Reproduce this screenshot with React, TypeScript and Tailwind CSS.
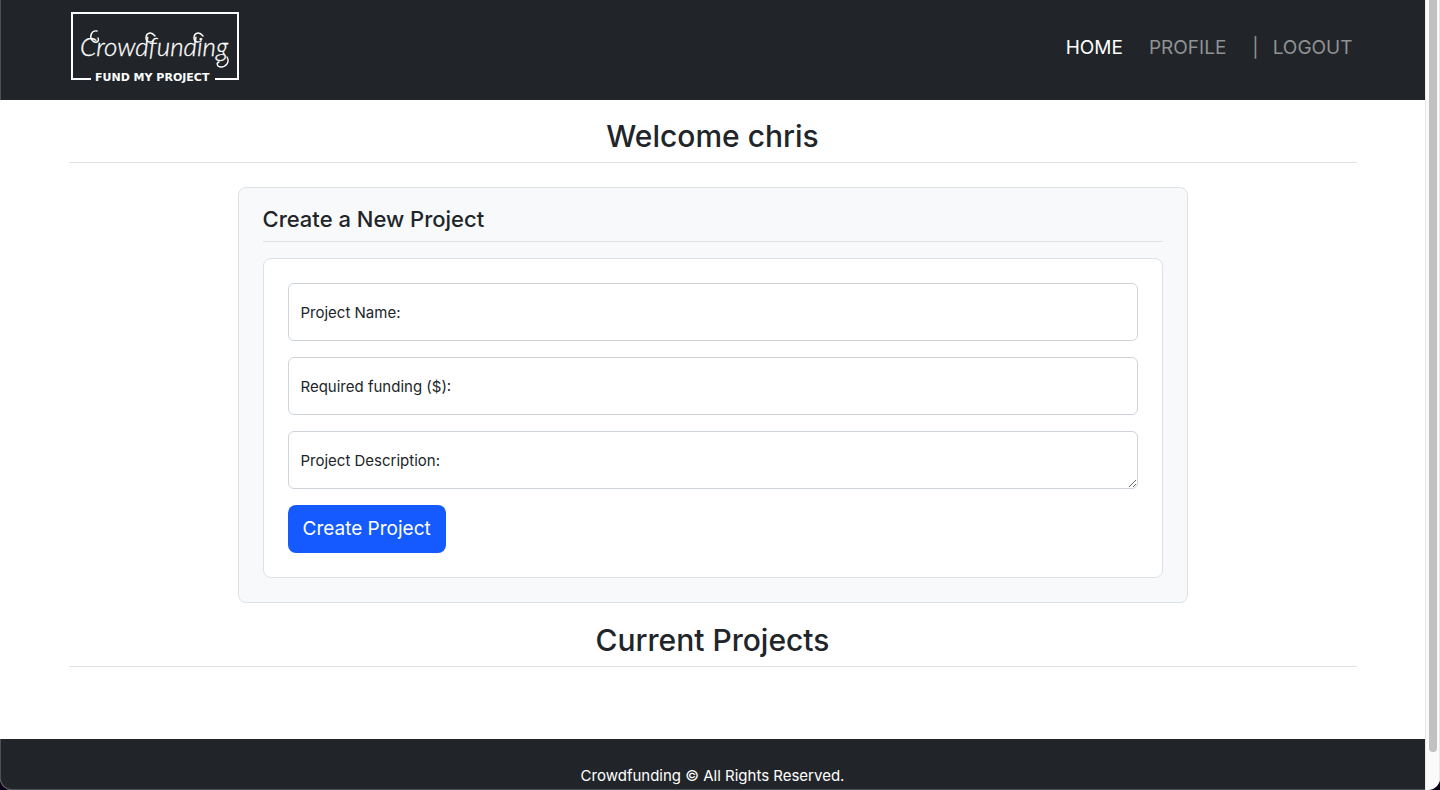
import React from "react";

function Logo() {
  return (
    <svg width="170" height="72" viewBox="0 0 170 72" role="img" aria-label="Crowdfunding, fund my project">
      <path d="M21 68H2V2H168V68H145" fill="none" stroke="#fff" strokeWidth="2" />
      <text x="10" y="45" fill="#fff" stroke="#fff" strokeWidth="0.3" fontFamily="Lato, 'Liberation Sans', sans-serif" fontWeight="300" fontStyle="italic" fontSize="26">
        Crowdfunding
      </text>
      <g fill="none" stroke="#fff" strokeWidth="1.4" strokeLinecap="round">
        <path d="M28 27C30 31 25 33 22 29C19 25 22 19 27 20" />
        <path d="M85 25C81 20 76 22 76 27C76 31 80 32 83 30" />
        <path d="M133 25C129 20 124 22 124 27C124 31 128 32 131 30" />
        <path d="M157 46C160 51 156 56 151 56C147 56 146 52 149 51" />
      </g>
      <text x="25" y="70" fill="#fff" fontFamily="'DejaVu Sans', sans-serif" fontWeight="700" fontSize="11">
        FUND MY PROJECT
      </text>
    </svg>
  );
}

function SectionTitle({ children }: { children: React.ReactNode }) {
  return (
    <h2 className="border-b border-[#dee2e6] pt-px pb-[7px] text-center text-[30px] font-medium leading-[38px]">
      {children}
    </h2>
  );
}

const fieldClass =
  "block h-[58px] w-full rounded-md border border-[#ced4da] bg-white px-3 pt-6 pb-2 text-base outline-none focus:border-[#86b7fe]";
const labelClass = "pointer-events-none absolute left-[13px] top-[18px] text-[15px] leading-6";

function Header() {
  return (
    <header className="bg-[#212529]">
      <div className="mx-auto flex h-[100px] max-w-[1288px] items-start justify-between">
        <a href="#home" className="mt-[11px] ml-px">
          <Logo />
        </a>
        <nav className="mt-[33px] mr-1 flex text-[19px] leading-[30px] text-[#909294]">
          <a href="#home" className="text-white">HOME</a>
          <a href="#profile" className="ml-[26px]">PROFILE</a>
          <span className="ml-[26px]">|</span>
          <a href="#logout" className="ml-[14px]">LOGOUT</a>
        </nav>
      </div>
    </header>
  );
}

function ProjectForm() {
  return (
    <section className="mx-auto mt-6 max-w-[950px] rounded-lg border border-[#dee2e6] bg-[#f8f9fa] px-6 pt-4 pb-6">
      <h3 className="border-b border-[#dee2e6] pt-px pb-[7px] text-[22px] font-medium leading-[29px]">
        Create a New Project
      </h3>
      <form
        className="mt-4 flex flex-col items-start gap-4 rounded-lg border border-[#dee2e6] bg-white p-6"
        onSubmit={(e) => e.preventDefault()}
      >
        <div className="relative w-full">
          <input id="name" type="text" className={fieldClass} />
          <label htmlFor="name" className={labelClass}>Project Name:</label>
        </div>
        <div className="relative w-full">
          <input id="funding" type="text" className={fieldClass} />
          <label htmlFor="funding" className={labelClass}>Required funding ($):</label>
        </div>
        <div className="relative w-full">
          <textarea id="description" className={fieldClass} />
          <label htmlFor="description" className={labelClass}>Project Description:</label>
        </div>
        <button type="submit" className="h-12 rounded-lg bg-[#145aff] px-[15px] text-[19px] text-white">
          Create Project
        </button>
      </form>
    </section>
  );
}

export default function App() {
  return (
    <div className="bg-[#0b0218] font-['Inter','Liberation_Sans',sans-serif] text-[#212529]">
      <div className="relative flex min-h-screen overflow-hidden rounded-b-xl">
        <div className="flex min-w-0 flex-1 flex-col bg-white">
          <Header />
          <main className="mx-auto w-full max-w-[1288px] pt-4 pb-[72px]">
            <SectionTitle>Welcome chris</SectionTitle>
            <ProjectForm />
            <div className="mt-[17px]">
              <SectionTitle>Current Projects</SectionTitle>
            </div>
          </main>
          <footer className="flex-1 bg-[#212529] pt-[25px] text-center text-[15px] leading-6 text-white">
            <p>Crowdfunding © All Rights Reserved.</p>
          </footer>
        </div>
        <div className="flex w-[15px] justify-center border-x border-[#e8e8e8] bg-[#fafafa] pb-[38px]" aria-hidden="true">
          <div className="w-2 rounded-b-full bg-[#c1c1c1]" />
        </div>
        <div className="pointer-events-none absolute inset-0 rounded-b-xl border-b border-l border-white/20" />
      </div>
    </div>
  );
}
